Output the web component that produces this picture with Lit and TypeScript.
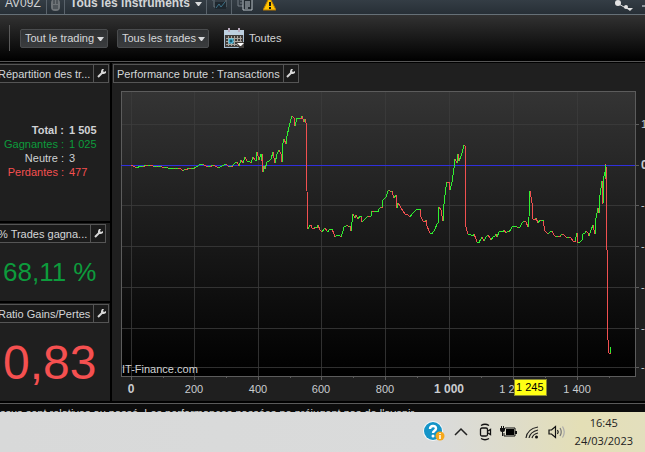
import { LitElement, html, svg, css } from "lit";
import { customElement, property } from "lit/decorators.js";

type Point = [number, number];

const PLOT_W = 514;
const PLOT_H = 285;

// Performance curve, in plot units.
const CURVE: Point[] = [
  [10, 74], [15, 76], [21, 75], [28, 74], [33, 75], [40, 75], [41, 76], [50, 77], [58, 77], [60, 78],
  [62, 80], [64, 78], [68, 77], [73, 77], [75, 76], [78, 74], [81, 73], [85, 75], [88, 75], [92, 74],
  [97, 77], [101, 75], [105, 73], [108, 76], [111, 75], [114, 72], [116, 71], [118, 75], [120, 69],
  [122, 72], [124, 66], [126, 70], [130, 72], [132, 66], [135, 69], [136, 61], [138, 69], [140, 63],
  [140, 69], [141, 63], [142, 81], [143, 75], [144, 78], [146, 71], [150, 68], [152, 61], [154, 72],
  [156, 63], [158, 59], [160, 63], [161, 71], [162, 52], [163, 48], [165, 53], [166, 45], [168, 36],
  [170, 28], [171, 25], [173, 27], [174, 35], [176, 27], [178, 27], [181, 25], [183, 31], [184, 28],
  [185, 30], [186, 100], [187, 138], [190, 134], [191, 137], [196, 137], [197, 134], [201, 141],
  [204, 137], [207, 140], [211, 138], [214, 146], [216, 144], [220, 146], [223, 136], [226, 134],
  [229, 135], [230, 140], [232, 123], [234, 127], [235, 124], [237, 128], [240, 125], [241, 131],
  [245, 127], [250, 125], [251, 120], [253, 121], [258, 118], [261, 116], [262, 109], [265, 106],
  [268, 99], [271, 100], [273, 107], [275, 104], [276, 117], [277, 112], [280, 117], [282, 120],
  [285, 123], [289, 126], [291, 123], [295, 119], [299, 118], [300, 126], [302, 130], [305, 129],
  [306, 135], [309, 142], [311, 142], [314, 138], [317, 132], [318, 116], [320, 119], [322, 130],
  [323, 113], [325, 96], [326, 91], [328, 91], [329, 99], [331, 91], [333, 77], [334, 68], [336, 72],
  [337, 63], [338, 70], [341, 62], [343, 54], [344, 55], [344, 134], [345, 136], [347, 143],
  [350, 144], [353, 143], [356, 151], [360, 148], [361, 146], [363, 150], [367, 144], [370, 149],
  [375, 143], [376, 146], [378, 141], [383, 139], [385, 142], [388, 141], [391, 136], [395, 135],
  [397, 137], [403, 130], [405, 131], [407, 136], [408, 126], [409, 100], [411, 112], [412, 128],
  [415, 127], [417, 132], [420, 129], [422, 129], [424, 140], [427, 143], [431, 140], [435, 146],
  [441, 143], [446, 147], [450, 147], [454, 150], [456, 142], [457, 152], [461, 149], [462, 143],
  [465, 140], [468, 145], [470, 139], [472, 134], [474, 143], [475, 127], [477, 117], [478, 122],
  [479, 104], [481, 90], [482, 113], [483, 85], [484, 81], [484, 87], [485, 74], [486, 157],
  [487, 249], [488, 262], [489, 262], [490, 256],
];

const RIPPLE = [0, -1, 1, 0, 1, -1];

// Adds the small trade-by-trade ripple between the main points.
function detail(points: Point[]): Point[] {
  const out: Point[] = [points[0]];
  let k = 0;
  for (let i = 1; i < points.length; i++) {
    const [x0, y0] = points[i - 1];
    const [x1, y1] = points[i];
    for (let x = x0 + 2; x < x1; x += 2) {
      const y = Math.round(y0 + ((y1 - y0) * (x - x0)) / (x1 - x0));
      out.push([x, y + (x0 > 110 ? RIPPLE[k++ % 6] : 0)]);
    }
    out.push([x1, y1]);
  }
  return out;
}

const SERIES = detail(CURVE);
const X_GRID = [10, 73, 137, 200, 264, 328, 392, 456];
const X_MINOR = [42, 105, 169, 232, 296, 360, 424, 488];
const Y_GRID = [33, 114, 155, 196, 237, 276];
const ZERO = 74;

const X_LABELS = [
  { x: 10, text: "0", strong: true },
  { x: 73, text: "200", strong: false },
  { x: 137, text: "400", strong: false },
  { x: 200, text: "600", strong: false },
  { x: 264, text: "800", strong: false },
  { x: 328, text: "1 000", strong: true },
  { x: 392, text: "1 200", strong: false },
  { x: 456, text: "1 400", strong: false },
];

const Y_LABELS = [
  { y: 33, text: "10 000", strong: false },
  { y: 74, text: "0", strong: true },
  { y: 114, text: "-10 000", strong: false },
  { y: 155, text: "-20 000", strong: false },
  { y: 196, text: "-30 000", strong: false },
  { y: 237, text: "-40 000", strong: false },
  { y: 276, text: "-50 000", strong: false },
];

@customElement("title-tab")
export class TitleTab extends LitElement {
  @property() label = "";

  static styles = css`
    :host {
      display: flex;
      width: fit-content;
      height: 17px;
      border: 1px solid #555;
      background: #1b1b1b;
    }
    .text {
      margin: 0;
      padding: 0 3px;
      font: 11px/18px "Liberation Sans", Arial, sans-serif;
      color: #d4d6d8;
      white-space: nowrap;
    }
    .tool {
      display: grid;
      place-items: center;
      width: 15px;
      padding: 0;
      border: 0;
      border-left: 1px solid #555;
      background: none;
    }
  `;

  render() {
    return html`
      <h2 class="text">${this.label}</h2>
      <button class="tool" aria-label="Réglages">
        <svg width="9" height="9" viewBox="0 0 9 9">
          <path d="M1 8 L5 4" stroke="#d8d8d8" stroke-width="2" />
          <path d="M7 0 L5 0 L4 2 L4 5 L7 5 L9 4 L9 2 L7 3 L6 2 Z" fill="#d8d8d8" />
        </svg>
      </button>
    `;
  }
}

@customElement("perf-chart")
export class PerfChart extends LitElement {
  static styles = css`
    :host {
      display: grid;
      grid-template: 1fr 25px / 1fr 10px;
      font: 11px/14px "Liberation Sans", Arial, sans-serif;
      color: #c9cccf;
    }
    .plot {
      position: relative;
      min-height: 285px;
    }
    .plot svg {
      position: absolute;
      inset: 0;
      width: 100%;
      height: 100%;
      overflow: visible;
    }
    .brand {
      position: absolute;
      left: 1px;
      bottom: 0;
      color: #d0d2d4;
    }
    .axis-x {
      position: relative;
    }
    .axis-y {
      position: relative;
      overflow: hidden;
    }
    .axis-y svg {
      position: absolute;
      left: 0;
      top: 0;
      width: 4px;
      height: 100%;
    }
    .x-label {
      position: absolute;
      top: 6px;
      transform: translateX(-50%);
      white-space: nowrap;
    }
    .y-label {
      position: absolute;
      left: 6px;
      transform: translateY(-50%);
      white-space: nowrap;
    }
    .strong {
      font-weight: bold;
      font-size: 12px;
    }
    .cursor {
      position: absolute;
      top: 3px;
      padding: 0 2px 0 1px;
      border: 1px solid #8a8a30;
      background: #ffff14;
      color: #000;
      line-height: 15px;
      white-space: nowrap;
    }
  `;

  render() {
    const up: string[] = [];
    const down: string[] = [];
    for (let i = 1; i < SERIES.length; i++) {
      const [x0, y0] = SERIES[i - 1];
      const [x1, y1] = SERIES[i];
      const d = `M${x0} ${y0}L${x1} ${y1}`;
      if (y1 > y0 || (y1 === y0 && i % 2)) down.push(d);
      else up.push(d);
    }
    return html`
      <div class="plot">
        <svg viewBox="0 0 ${PLOT_W} ${PLOT_H}" preserveAspectRatio="none" role="img" aria-label="Performance brute">
          <defs>
            <linearGradient id="bg" x1="0" y1="0" x2="0" y2="1">
              <stop offset="0" stop-color="#343434" />
              <stop offset="1" stop-color="#000" />
            </linearGradient>
          </defs>
          <rect width=${PLOT_W} height=${PLOT_H} fill="url(#bg)" />
          <g shape-rendering="crispEdges" stroke="#3c3c3c" stroke-opacity="0.8">
            ${X_GRID.map((x) => svg`<line x1=${x} y1="0" x2=${x} y2=${PLOT_H} />`)}
            ${Y_GRID.map((y) => svg`<line x1="0" y1=${y} x2=${PLOT_W} y2=${y} />`)}
          </g>
          <g shape-rendering="crispEdges" stroke="#5c5c5c">
            <path d="M0 0H${PLOT_W}V${PLOT_H}H0Z" fill="none" />
            ${X_GRID.map((x) => svg`<line x1=${x} y1=${PLOT_H} x2=${x} y2=${PLOT_H + 4} />`)}
            ${X_MINOR.map((x) => svg`<line x1=${x} y1=${PLOT_H} x2=${x} y2=${PLOT_H + 2} />`)}
          </g>
          <rect x="0" y=${ZERO} width=${PLOT_W} height="1" fill="#3030dc" shape-rendering="crispEdges" />
          <g fill="none" stroke-linecap="square" shape-rendering="crispEdges">
            <path d=${down.join("")} stroke="#f05050" />
            <path d=${up.join("")} stroke="#30f030" />
          </g>
        </svg>
        <span class="brand">IT-Finance.com</span>
      </div>
      <div class="axis-y">
        <svg viewBox="0 0 4 ${PLOT_H}" preserveAspectRatio="none" shape-rendering="crispEdges" stroke="#5c5c5c">
          ${[...Y_GRID, ZERO].map((y) => svg`<line x1="0" y1=${y} x2="4" y2=${y} />`)}
        </svg>
        ${Y_LABELS.map(
          (l) => html`<span class="y-label ${l.strong ? "strong" : ""}" style="top:${(l.y / PLOT_H) * 100}%">${l.text}</span>`
        )}
      </div>
      <div class="axis-x">
        ${X_LABELS.map(
          (l) => html`<span class="x-label ${l.strong ? "strong" : ""}" style="left:${(l.x / PLOT_W) * 100}%">${l.text}</span>`
        )}
        <span class="cursor" style="left:${(393 / PLOT_W) * 100}%">1 245</span>
      </div>
    `;
  }
}

@customElement("app-root")
export class AppRoot extends LitElement {
  static styles = css`
    :host {
      display: block;
      background: #000;
      color: #d0d2d4;
      font: 11px/14px "Liberation Sans", Arial, sans-serif;
    }
    button {
      padding: 0;
      border: 0;
      background: none;
      color: inherit;
      font: inherit;
    }
    .topbar {
      display: flex;
      align-items: flex-end;
      height: 14px;
      overflow: hidden;
      border-bottom: 1px solid #667077;
      background: linear-gradient(#343d45, #272f36);
    }
    .cell {
      display: flex;
      align-items: flex-end;
      box-sizing: border-box;
      height: 24px;
      border-right: 1px solid #5a636b;
      flex: none;
    }
    .symbol {
      width: 47px;
      padding: 0 0 4px 5px;
      font-size: 12px;
    }
    .name {
      padding: 0 3px 4px 5px;
    }
    .icon {
      justify-content: center;
    }
    .lock {
      width: 18px;
      padding-bottom: 2px;
    }
    .tile {
      width: 25px;
      padding-bottom: 3px;
    }
    .last {
      border-right: 0;
    }
    .plain {
      display: flex;
      padding: 0 6px 3px;
    }
    .share {
      display: flex;
      margin-left: auto;
      padding: 0 8px 3px 0;
    }
    .minimise {
      width: 3px;
      height: 2px;
      margin-bottom: 7px;
      background: #8d969d;
    }
    .pick {
      position: relative;
      display: inline-flex;
    }
    .pick select {
      appearance: none;
      margin: 0;
      border: 1px solid #4a4c4e;
      border-radius: 2px;
      background: linear-gradient(#2f3133, #3a3c3e);
      color: #d4d6d8;
      font: 11px/14px "Liberation Sans", Arial, sans-serif;
      height: 19px;
      padding: 0 12px 0 4px;
    }
    .pick svg {
      position: absolute;
      right: 4px;
      top: 8px;
      pointer-events: none;
    }
    .pick .bare {
      border: 0;
      background: none;
      height: 14px;
      padding: 0 13px 0 0;
      font: bold 12px/14px "Liberation Sans", Arial, sans-serif;
    }
    .pick .bare + svg {
      right: 1px;
      top: 6px;
    }
    .toolbar {
      display: flex;
      align-items: center;
      height: 46px;
      padding-left: 9px;
      border-bottom: 1px solid #555;
      background: linear-gradient(#323232, #000);
    }
    .rule {
      width: 1px;
      height: 26px;
      margin-right: 10px;
      background: #5a5a5a;
    }
    .gap {
      margin-left: 9px;
    }
    .period {
      display: flex;
      align-items: center;
      gap: 5px;
      margin-left: 15px;
    }
    .body {
      display: grid;
      grid-template-columns: 110px 1fr;
      gap: 2px;
      padding: 1px 0 2px;
      border-bottom: 1px solid #5a5a5a;
    }
    .side {
      display: flex;
      flex-direction: column;
      gap: 2px;
      min-width: 0;
    }
    .panel {
      overflow: hidden;
      padding-top: 1px;
      background: #1f1f1f;
    }
    .side title-tab {
      margin-left: -6px;
    }
    .chart {
      display: flex;
      flex-direction: column;
      align-items: flex-start;
      padding-left: 1px;
    }
    .chart perf-chart {
      flex: 1;
      align-self: stretch;
      margin: 8px 0 0 8px;
    }
    .stats {
      display: grid;
      grid-template-columns: 64px 1fr;
      column-gap: 5px;
      margin: 0;
      padding: 40px 0 42px;
    }
    .stats dt {
      text-align: right;
      white-space: nowrap;
    }
    .stats dd {
      margin: 0;
    }
    .total {
      font-weight: bold;
    }
    .win {
      color: #0d9b3c;
    }
    .loss {
      color: #f55050;
    }
    .rate {
      margin: 0;
      padding: 14px 0 14px 3px;
      font-size: 26px;
      line-height: 30px;
      white-space: nowrap;
    }
    .ratio {
      margin: 0;
      padding: 12px 0 10px 3px;
      font-size: 48px;
      line-height: 56px;
    }
    .note {
      display: flex;
      height: 8px;
      margin: 0;
      overflow: hidden;
      background: #0c0c0c;
      white-space: nowrap;
    }
    .note span {
      padding-top: 2px;
    }
    .taskbar {
      display: flex;
      align-items: center;
      justify-content: flex-end;
      height: 40px;
      background: linear-gradient(90deg, #d8d9d9 0, #dadbdb 68%, #dedccb 79%, #e4dfb6 90%, #e3dfbd 100%);
      color: #222;
    }
    .taskbar button {
      display: flex;
      flex: none;
    }
    .tray {
      display: flex;
      align-items: center;
      gap: 8px;
      margin-right: 9px;
    }
    .clock {
      display: flex;
      flex-direction: column;
      align-items: center;
      margin-right: 12px;
      font: 11px/18px "Open Sans", "Noto Sans", sans-serif;
    }
  `;

  private arrow() {
    return html`<svg width="7" height="4" viewBox="0 0 7 4"><path d="M0 0H7L4 4H3Z" fill="#d8dadc" /></svg>`;
  }

  private picker(label: string, value: string, cls = "") {
    return html`<span class="pick">
      <select class=${cls} aria-label=${label}><option>${value}</option></select>
      ${this.arrow()}
    </span>`;
  }

  render() {
    return html`
      <header class="topbar">
        <span class="cell symbol">AV09Z</span>
        <button class="cell icon lock" aria-label="Lier">
          <svg width="11" height="14" viewBox="0 0 11 14">
            <rect x="1" y="1" width="9" height="12" rx="4" fill="#6f7478" />
            <path d="M4 0V6M7 0V6M3 8H8M3 10H8" stroke="#30373d" />
          </svg>
        </button>
        <div class="cell name">${this.picker("Instruments", "Tous les instruments", "bare")}</div>
        <button class="cell icon tile" aria-label="Graphique">
          <svg width="16" height="13" viewBox="0 0 16 13">
            <path d="M1 2H4M3 3V9H6M15 1V9H13" fill="none" stroke="#68747c" stroke-width="1" />
            <rect x="4" y="4" width="11" height="7" fill="#1e272e" />
            <path d="M5 10L8 6L10 9L14 4" fill="none" stroke="#3c7188" />
          </svg>
        </button>
        <button class="cell icon tile last" aria-label="Copier">
          <svg width="16" height="14" viewBox="0 0 16 14">
            <path d="M1 0V9H6M3 3H5M3 6H5" fill="none" stroke="#747d84" />
            <path d="M6 0H12L15 3V13H6Z" fill="#222a30" stroke="#b9c1c7" />
            <path d="M8 5H13M8 7H13M8 9H13M8 11H11" stroke="#b9c1c7" />
          </svg>
        </button>
        <button class="plain" aria-label="Alerte">
          <svg width="13" height="13" viewBox="0 0 13 13">
            <path d="M6 0L7 0L13 12H0Z" fill="#ffc400" stroke="#b87900" stroke-width="1" />
            <path d="M6 4H8V8H6ZM6 9H8V11H6Z" fill="#151515" />
          </svg>
        </button>
        <button class="share" aria-label="Partager">
          <svg width="20" height="12" viewBox="0 0 20 12">
            <path d="M3 4L10 8L16 10" stroke="#ddd" stroke-width="1" fill="none" />
            <circle cx="4" cy="4" r="3" fill="#e2e2e2" />
            <circle cx="12" cy="8" r="2" fill="#e2e2e2" />
            <path d="M12 9H19L16 12Z" fill="#e2e2e2" />
          </svg>
        </button>
        <span class="minimise"></span>
      </header>

      <nav class="toolbar">
        <span class="rule"></span>
        ${this.picker("Type de trading", "Tout le trading")}
        <span class="gap"></span>
        ${this.picker("Type de trades", "Tous les trades")}
        <button class="period">
          <svg width="20" height="20" viewBox="0 0 20 20">
            <rect x="0" y="2" width="20" height="18" fill="#a9bfd2" />
            <rect x="0" y="2" width="20" height="5" fill="#bdd0e0" />
            <rect x="1" y="7" width="18" height="12" fill="#403d3b" />
            <path d="M2 10H18M2 13H18M2 16H18M4 8V18M7 8V18M10 8V18M13 8V18M16 8V18" stroke="#aaa49d" shape-rendering="crispEdges" />
            <rect x="5" y="11" width="4" height="4" fill="#165b72" stroke="#62d9ff" />
            <path d="M5 0V4M15 0V4" stroke="#b8a9bd" stroke-width="2" />
            <path d="M12 14H20V20H15Z" fill="#403d3b" />
            <path d="M13 15H20L17 18H16Z" fill="#fff" />
          </svg>
          Toutes
        </button>
      </nav>

      <main class="body">
        <div class="side">
          <section class="panel">
            <title-tab label="Répartition des tr..."></title-tab>
            <dl class="stats">
              <dt class="total">Total :</dt><dd class="total">1 505</dd>
              <dt class="win">Gagnantes :</dt><dd class="win">1 025</dd>
              <dt>Neutre :</dt><dd>3</dd>
              <dt class="loss">Perdantes :</dt><dd class="loss">477</dd>
            </dl>
          </section>
          <section class="panel">
            <title-tab label="% Trades gagna..."></title-tab>
            <p class="rate win">68,11 %</p>
          </section>
          <section class="panel">
            <title-tab label="Ratio Gains/Pertes"></title-tab>
            <p class="ratio loss">0,83</p>
          </section>
        </div>
        <section class="panel chart">
          <title-tab label="Performance brute : Transactions"></title-tab>
          <perf-chart></perf-chart>
        </section>
      </main>

      <p class="note"><span>ssus sont relatives au passé. Les performances passées ne préjugent pas de l'avenir.</span></p>

      <footer class="taskbar">
        <div class="tray">
          <button aria-label="Aide">
            <svg width="23" height="22" viewBox="0 0 23 22">
              <circle cx="10" cy="10" r="10" fill="#f4f8fa" />
              <circle cx="10" cy="10" r="9" fill="#1494c8" />
              <path d="M7 8C7 4 13 4 13 7.500C13 10 10 9.500 10 12" fill="none" stroke="#fff" stroke-width="2.400" />
              <circle cx="10" cy="15" r="1.500" fill="#fff" />
              <circle cx="17" cy="15" r="4.500" fill="#f6a81c" />
              <path d="M17 14V18M17 12V13" stroke="#fff" stroke-width="1.500" />
            </svg>
          </button>
          <button aria-label="Icônes cachées">
            <svg width="17" height="16" viewBox="0 0 17 16"><path d="M1 11L7 5L13 11" fill="none" stroke="#222" stroke-width="1.500" /></svg>
          </button>
          <button aria-label="Caméra">
            <svg width="13" height="18" viewBox="3 0 13 18" fill="none" stroke="#111" stroke-width="1.300">
              <rect x="4.500" y="5" width="7" height="8" rx="1.500" />
              <path d="M12 8L14.500 6.500V11.500L12 10M5 2.500Q9 0 13 2.500M5 15.500Q9 18 13 15.500" />
            </svg>
          </button>
          <button aria-label="Batterie">
            <svg width="17" height="16" viewBox="0 0 17 16">
              <path d="M5 4H15V12H4V9" fill="none" stroke="#111" />
              <rect x="6" y="5" width="8" height="6" fill="#000" />
              <path d="M15 7H17V10H15ZM0 4H5V6Q5 8 3 8V12H2V8Q0 8 0 6ZM1 2H2V4H1ZM3 2H4V4H3Z" fill="#111" />
            </svg>
          </button>
          <button aria-label="Wi-Fi">
            <svg width="15" height="16" viewBox="0 0 15 16" fill="none" stroke="#222" stroke-width="1.200">
              <path d="M1 14Q2 5 13 3" />
              <path d="M4 14Q5 8 13 6" />
              <path d="M7 14Q8 10 13 9" />
              <circle cx="11.500" cy="13" r="1.500" fill="#111" stroke="none" />
            </svg>
          </button>
          <button aria-label="Volume">
            <svg width="18" height="16" viewBox="0 0 18 16" fill="none" stroke="#111" stroke-width="1.200">
              <path d="M1 6H3.500L7.500 2.500V13.500L3.500 10H1Z" />
              <path d="M9.500 6Q11 8 9.500 10" />
              <path d="M12 4Q14.500 8 12 12" stroke="#777" />
              <path d="M14.500 2.500Q18 8 14.500 13.500" stroke="#aaa" />
            </svg>
          </button>
        </div>
        <time class="clock" datetime="2023-03-24T16:45"><span>16:45</span><span>24/03/2023</span></time>
      </footer>
    `;
  }
}
